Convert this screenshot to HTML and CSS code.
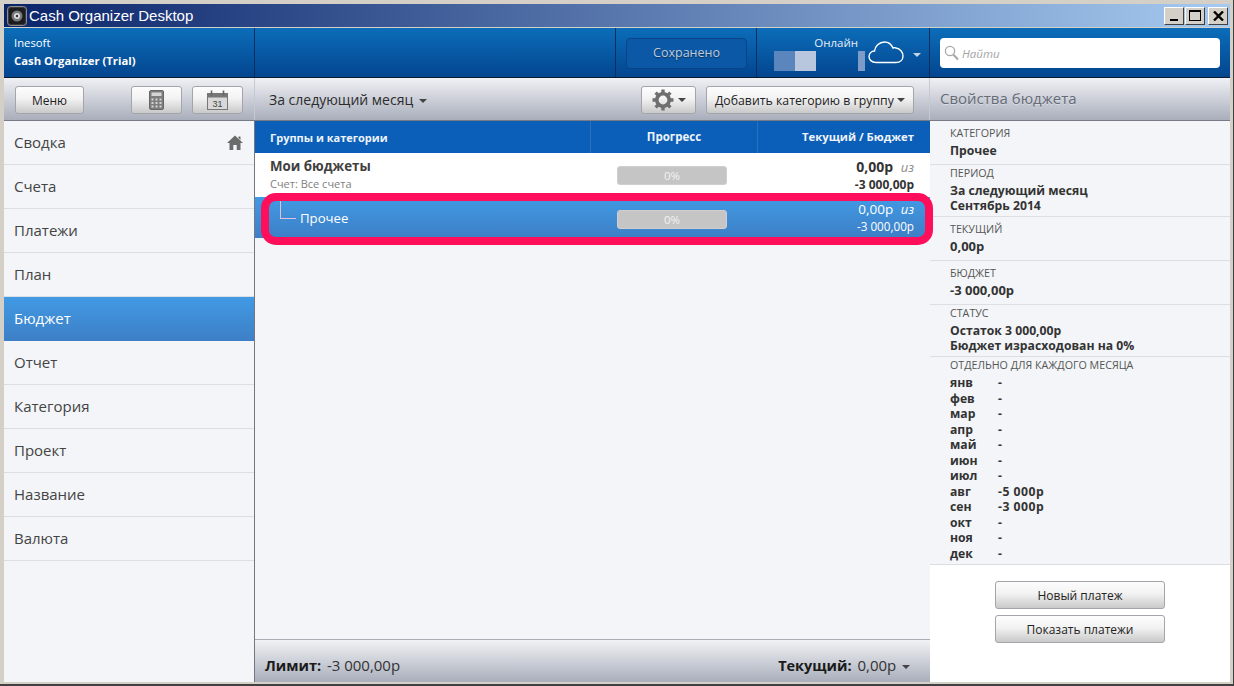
FILE: index.html
```html
<!DOCTYPE html>
<html>
   <head>
      <meta charset="UTF-8">
      <title>Cash Organizer Desktop</title>
      <link rel="stylesheet" href="styles.css">
   </head>
   <body>
      <div class="window">
         <div class="titlebar">
            <svg class="app-icon" width="20" height="20" viewBox="0 0 20 20">
               <rect x="0.5" y="0.5" width="19" height="19" rx="3" fill="#3a3a3c" stroke="#8d8d8d"/>
               <rect x="2" y="2" width="16" height="16" rx="2" fill="#1c1c1e"/>
               <circle cx="10" cy="10" r="5.5" fill="#77797c"/>
               <circle cx="10" cy="10" r="3" fill="#d9dadb"/>
               <circle cx="10" cy="10" r="1.2" fill="#333"/>
            </svg>
            <span class="title-text">Cash Organizer Desktop</span>
            <div class="win-buttons">
               <div class="win-btn"><span class="win-min"></span></div>
               <div class="win-btn"><span class="win-max"></span></div>
               <div class="win-btn win-btn-close">
                  <svg width="11" height="10" viewBox="0 0 11 10"><path d="M1 0.5 L10 9.5 M10 0.5 L1 9.5" stroke="#000" stroke-width="2.4" fill="none"/></svg>
               </div>
            </div>
         </div>

         <div class="header">
            <div class="brand">
               <div class="brand-company">Inesoft</div>
               <div class="brand-product">Cash Organizer (Trial)</div>
            </div>
            <div class="header-blank"></div>
            <div class="header-saved"><div class="saved-btn">Сохранено</div></div>
            <div class="header-online">
               <div class="online-text">
                  <div class="online-label">Онлайн</div>
                  <div class="online-bar">
                     <span class="blur-a"></span><span class="blur-b"></span><span class="blur-gap"></span><span class="blur-c"></span>
                  </div>
               </div>
               <svg class="cloud" width="36" height="24" viewBox="0 0 36 24">
                  <path d="M8 22.5 C3.5 22.5 1 19.5 1 16.5 C1 13.5 3.5 11 6.5 11 C7 6.5 11 2 16.5 2 C20.5 2 23.5 4.5 25 8 C26 7.5 27 7.5 28 8 C32 8.5 35 12 35 16 C35 20 32 22.5 28 22.5 Z" fill="none" stroke="#fff" stroke-width="1.4"/>
               </svg>
               <span class="caret caret-light"></span>
            </div>
            <div class="header-search">
               <div class="search-box">
                  <svg width="15" height="16" viewBox="0 0 15 16">
                     <circle cx="6" cy="6" r="4.6" fill="none" stroke="#a8a8a8" stroke-width="1.3"/>
                     <path d="M9.5 9.8 L14 14.5" stroke="#a8a8a8" stroke-width="2" fill="none"/>
                  </svg>
                  <span class="search-text">Найти</span>
               </div>
            </div>
         </div>

         <div class="toolbar">
            <div class="tool-left">
               <div class="btn btn-menu">Меню</div>
               <div class="btn btn-icon btn-calc">
                  <svg width="15" height="20" viewBox="0 0 15 20">
                     <rect x="0.5" y="0.5" width="14" height="19" rx="1.5" fill="#7d7d7d" stroke="#666"/>
                     <rect x="2.5" y="2.5" width="10" height="3.5" fill="#d5d5d5"/>
                     <path d="M2.5 8.5h2v2h-2zM6.5 8.5h2v2h-2zM10.5 8.5h2v2h-2zM2.5 12h2v2h-2zM6.5 12h2v2h-2zM10.5 12h2v2h-2zM2.5 15.5h2v2h-2zM6.5 15.5h2v2h-2zM10.5 15.5h2v2h-2z" fill="#d5d5d5"/>
                  </svg>
               </div>
               <div class="btn btn-icon">
                  <svg width="21" height="20" viewBox="0 0 21 20">
                     <rect x="0.5" y="3.5" width="20" height="16" fill="#d8d8d8" stroke="#777"/>
                     <rect x="0.5" y="3.5" width="20" height="4" fill="#777"/>
                     <path d="M4.5 0.5v5M16.5 0.5v5" stroke="#666" stroke-width="1.6"/>
                     <text x="10.5" y="17" class="cal-num">31</text>
                  </svg>
               </div>
            </div>
            <div class="tool-center">
               <div class="period">За следующий месяц <span class="caret period-caret"></span></div>
               <div class="tool-actions">
                  <div class="btn btn-gear">
                     <svg width="22" height="22" viewBox="0 0 22 22">
                        <circle cx="11" cy="11" r="6.2" fill="none" stroke="#6f6f6f" stroke-width="3.6"/>
                        <g stroke="#6f6f6f" stroke-width="3.4">
                           <path d="M11 0.5v4M11 17.5v4M0.5 11h4M17.5 11h4M3.6 3.6l2.8 2.8M15.6 15.6l2.8 2.8M3.6 18.4l2.8-2.8M15.6 6.4l2.8-2.8"/>
                        </g>
                     </svg>
                     <span class="caret"></span>
                  </div>
                  <div class="btn btn-add">Добавить категорию в группу <span class="caret"></span></div>
               </div>
            </div>
            <div class="tool-right">Свойства бюджета</div>
         </div>

         <div class="main">
            <ul class="nav">
               <li class="nav-item">Сводка
                  <svg class="nav-home" width="16" height="15" viewBox="0 0 16 15"><path d="M8 0.5 L16 8 L13.5 8 L13.5 15 L9.7 15 L9.7 10 L6.3 10 L6.3 15 L2.5 15 L2.5 8 L0 8 Z M11.5 1.5 h2 v3.5 l-2 -2 z" fill="#6b6b6b"/></svg>
               </li>
               <li class="nav-item">Счета</li>
               <li class="nav-item">Платежи</li>
               <li class="nav-item">План</li>
               <li class="nav-item nav-active">Бюджет</li>
               <li class="nav-item">Отчет</li>
               <li class="nav-item">Категория</li>
               <li class="nav-item">Проект</li>
               <li class="nav-item">Название</li>
               <li class="nav-item">Валюта</li>
            </ul>

            <div class="budget">
               <div class="table-head">
                  <div class="col-name">Группы и категории</div>
                  <div class="col-progress">Прогресс</div>
                  <div class="col-amount">Текущий / Бюджет</div>
               </div>
               <div class="row row-group">
                  <div class="col-name">
                     <div class="group-name">Мои бюджеты</div>
                     <div class="group-sub">Счет: Все счета</div>
                  </div>
                  <div class="col-progress"><div class="progress">0%</div></div>
                  <div class="col-amount">
                     <div class="amount-top">0,00р <i>из</i></div>
                     <div class="amount-bottom">-3 000,00р</div>
                  </div>
               </div>
               <div class="row row-selected">
                  <div class="col-name"><span class="tree-line"></span>Прочее</div>
                  <div class="col-progress"><div class="progress">0%</div></div>
                  <div class="col-amount">
                     <div class="amount-top">0,00р <i>из</i></div>
                     <div class="amount-bottom">-3 000,00р</div>
                  </div>
               </div>
               <div class="budget-empty"></div>
               <div class="budget-foot">
                  <div><b>Лимит:</b> <span class="foot-num">-3 000,00р</span></div>
                  <div><b>Текущий:</b> <span class="foot-num">0,00р</span> <span class="caret"></span></div>
               </div>
            </div>

            <div class="props">
               <div class="prop prop-1">
                  <div class="prop-label">Категория</div>
                  <div class="prop-value">Прочее</div>
               </div>
               <div class="prop prop-2">
                  <div class="prop-label">Период</div>
                  <div class="prop-value">За следующий месяц<br>Сентябрь 2014</div>
               </div>
               <div class="prop prop-3">
                  <div class="prop-label">Текущий</div>
                  <div class="prop-value prop-num">0,00р</div>
               </div>
               <div class="prop prop-3">
                  <div class="prop-label">Бюджет</div>
                  <div class="prop-value prop-num">-3 000,00р</div>
               </div>
               <div class="prop prop-2">
                  <div class="prop-label">Статус</div>
                  <div class="prop-value">Остаток 3 000,00р<br>Бюджет израсходован на 0%</div>
               </div>
               <div class="prop prop-months">
                  <div class="prop-label">Отдельно для каждого месяца</div>
                  <div class="months">
                     <span>янв</span><span>-</span>
                     <span>фев</span><span>-</span>
                     <span>мар</span><span>-</span>
                     <span>апр</span><span>-</span>
                     <span>май</span><span>-</span>
                     <span>июн</span><span>-</span>
                     <span>июл</span><span>-</span>
                     <span>авг</span><span class="month-num">-5 000р</span>
                     <span>сен</span><span class="month-num">-3 000р</span>
                     <span>окт</span><span>-</span>
                     <span>ноя</span><span>-</span>
                     <span>дек</span><span>-</span>
                  </div>
               </div>
               <div class="props-actions">
                  <div class="btn btn-wide">Новый платеж</div>
                  <div class="btn btn-wide">Показать платежи</div>
               </div>
            </div>
         </div>

         <div class="highlight"></div>
      </div>
   </body>
</html>
```

FILE: styles.css
```css
*
{
   box-sizing: border-box;
}

html, body
{
   margin: 0;
   height: 100%;
   overflow: hidden;
}

body
{
   font-family: "Open Sans", "Liberation Sans", sans-serif;
   color: #333;
}

.window
{
   position: relative;
   width: 1234px;
   height: 686px;
   padding: 4px 3px 2px 4px;
   display: flex;
   flex-direction: column;
   background: #d4d0c8;
   border-right: 1px solid #404040;
   border-bottom: 2px solid #404040;
}

/* title bar */
.titlebar
{
   height: 23px;
   flex: none;
   display: flex;
   align-items: center;
   padding: 0 2px 0 3px;
   background: linear-gradient(to right, #0a246a 0%, #a6caf0 100%);
   margin-bottom: 1px;
}

.app-icon
{
   flex: none;
}

.title-text
{
   margin-left: 2px;
   font-family: "Liberation Sans", sans-serif;
   font-size: 15px;
   color: #fff;
}

.win-buttons
{
   margin-left: auto;
   display: flex;
   gap: 1px;
}

.win-btn
{
   width: 20px;
   height: 18px;
   position: relative;
   display: flex;
   align-items: center;
   justify-content: center;
   background: #d4d0c8;
   border: 1px solid;
   border-color: #fff #404040 #404040 #fff;
}

.win-btn-close
{
   margin-left: 2px;
}

.win-min
{
   width: 8px;
   height: 2px;
   background: #000;
   margin-top: 9px;
}

.win-max
{
   width: 12px;
   height: 11px;
   border: 1px solid #000;
   border-top-width: 2px;
}

/* blue header */
.header
{
   height: 50px;
   flex: none;
   display: flex;
   background: linear-gradient(to bottom, #0c6db9, #03458f);
   border-bottom: 1px solid #0b1a2c;
   color: #fff;
}

.brand
{
   width: 251px;
   padding: 7px 0 0 10px;
   border-right: 1px solid #0a2f5d;
   font-size: 11.3px;
}

.brand-company
{
   line-height: 15px;
}

.brand-product
{
   margin-top: 3px;
   line-height: 15px;
   font-weight: 700;
}

.header-blank
{
   width: 361px;
   border-right: 1px solid #0a2f5d;
}

.header-saved
{
   width: 141px;
   padding: 10px 9px 0 10px;
   border-right: 1px solid #0a2f5d;
}

.saved-btn
{
   height: 31px;
   line-height: 27px;
   text-align: center;
   font-size: 12.5px;
   color: #c0ccda;
   background: #0a58a6;
   border: 1px solid #0a4387;
   border-radius: 4px;
   text-shadow: 0 1px 1px #07305f;
}

.header-online
{
   width: 173px;
   display: flex;
   padding: 7px 0 0 17px;
   position: relative;
   border-right: 1px solid #0a2f5d;
}

.online-text
{
   width: 91px;
}

.online-label
{
   font-size: 11.5px;
   line-height: 15px;
   text-align: right;
   padding-right: 7px;
   color: #e4ecf5;
}

.online-bar
{
   display: flex;
   height: 20px;
   margin-top: 1px;
}

.blur-a
{
   width: 21px;
   background: #5b85bd;
}

.blur-b
{
   width: 21px;
   background: #b8c6de;
}

.blur-gap
{
   width: 42px;
}

.blur-c
{
   width: 7px;
   background: #7e9cc9;
}

.cloud
{
   margin-top: 5px;
   margin-left: 3px;
}

.header-online .caret
{
   margin: 18px 0 0 9px;
}

.header-search
{
   flex: 1;
   padding: 10px 10px 0 10px;
}

.search-box
{
   height: 30px;
   display: flex;
   align-items: center;
   padding-left: 4px;
   gap: 3px;
   background: #fff;
   border-radius: 4px;
}

.search-text
{
   font-size: 11.5px;
   font-style: italic;
   color: #a4a4a4;
}

/* carets */
.caret
{
   display: inline-block;
   width: 0;
   height: 0;
   vertical-align: middle;
   border-left: 4px solid transparent;
   border-right: 4px solid transparent;
   border-top: 4px solid #444;
}

.caret-light
{
   border-top-color: #c6d6e8;
}

.period-caret
{
   margin-left: 2px;
}

/* toolbar */
.toolbar
{
   height: 43px;
   flex: none;
   display: flex;
   background: linear-gradient(to bottom, #f0f1f5, #a9aebb);
   border-bottom: 1px solid #777b85;
}

.tool-left
{
   width: 251px;
   padding: 8px 0 0 11px;
   display: flex;
   border-right: 1px solid #c6c9d2;
}

.tool-center
{
   width: 675px;
   display: flex;
   justify-content: space-between;
   padding: 8px 15px 0 14px;
   border-right: 1px solid #c6c9d2;
}

.period
{
   font-size: 14px;
   line-height: 27px;
   color: #2c2c2c;
}

.tool-actions
{
   display: flex;
   gap: 10px;
}

.tool-right
{
   flex: 1;
   padding-left: 10px;
   font-size: 15px;
   line-height: 41px;
   color: #666b76;
   text-shadow: 0 1px 0 #d8dbe2;
}

.btn
{
   height: 28px;
   display: flex;
   align-items: center;
   justify-content: center;
   font-size: 12px;
   color: #222;
   background: linear-gradient(to bottom, #fdfdfd 0%, #f2f2f2 45%, #c9c9c9 100%);
   border: 1px solid #a3a5ab;
   border-radius: 3px;
}

.btn-menu
{
   width: 69px;
   margin-right: 47px;
}

.btn-icon
{
   width: 51px;
   margin-right: 10px;
}

.btn-gear
{
   width: 55px;
   gap: 4px;
}

.btn-add
{
   width: 208px;
   font-size: 12.3px;
   white-space: pre;
}

.cal-num
{
   font-family: "Liberation Sans", sans-serif;
   font-size: 9px;
   fill: #444;
   text-anchor: middle;
}

/* main area */
.main
{
   flex: 1;
   min-height: 0;
   display: flex;
}

.nav
{
   width: 251px;
   margin: 0;
   padding: 0;
   list-style: none;
   background: #f3f5f8;
   border-right: 1px solid #74777f;
}

.nav-item
{
   height: 44px;
   display: flex;
   align-items: center;
   justify-content: space-between;
   padding: 0 11px 2px 10px;
   font-size: 15px;
   color: #444;
   border-bottom: 1px solid #dcdee2;
}

.nav-home
{
   margin-top: 2px;
}

.nav-active
{
   color: #fff;
   background: linear-gradient(to bottom, #419ae4, #3d7fc6);
   border-bottom: none;
   padding-bottom: 3px;
}

.budget
{
   width: 675px;
   display: flex;
   flex-direction: column;
   background: #f3f5f8;
}

.table-head
{
   height: 32px;
   flex: none;
   display: flex;
   align-items: center;
   font-size: 11.5px;
   font-weight: 700;
   color: #eef4fb;
   background: #0b5fb9;
}

.table-head .col-name
{
   font-size: 11px;
}

.table-head .col-amount
{
   font-size: 11.3px;
}

.table-head .col-progress,
.table-head .col-amount
{
   height: 100%;
   line-height: 32px;
   border-left: 1px solid #2a70bb;
}

.col-name
{
   width: 335px;
   padding-left: 15px;
}

.col-progress
{
   width: 167px;
   text-align: center;
}

.col-amount
{
   flex: 1;
   padding-right: 16px;
   text-align: right;
}

.row
{
   display: flex;
   align-items: center;
   flex: none;
}

.row-group
{
   height: 44px;
   background: #fff;
}

.row-selected
{
   height: 41px;
   color: #fff;
   background: linear-gradient(to bottom, #419ae4, #3d7fc6);
}

.row-selected .col-name
{
   position: relative;
   padding-left: 45px;
   font-size: 13.2px;
}

.row-selected .col-progress
{
   padding-top: 4px;
}

.row-selected .amount-top
{
   font-size: 13.5px;
}

.row-selected .amount-bottom
{
   font-size: 11.7px;
}

.tree-line
{
   position: absolute;
   left: 25px;
   top: -15px;
   width: 16px;
   height: 25px;
   border-left: 1px solid #e4bde2;
   border-bottom: 1px solid #e4bde2;
}

.group-name
{
   margin-top: -2px;
   font-size: 13.3px;
   font-weight: 700;
   line-height: 18px;
   color: #404040;
}

.group-sub
{
   margin-top: 1px;
   font-size: 11px;
   line-height: 15px;
   color: #808080;
}

.progress
{
   width: 110px;
   height: 19px;
   margin-left: 27px;
   line-height: 17px;
   font-size: 11.5px;
   color: #f2f2f2;
   background: #c5c5c5;
   border: 1px solid #cfcfcf;
   border-radius: 3px;
}

.amount-top
{
   font-size: 14px;
   line-height: 18px;
}

.amount-top i
{
   margin-left: 4px;
   font-size: 13px;
}

.amount-bottom
{
   font-size: 12px;
   line-height: 17px;
}

.row-group .amount-top,
.row-group .amount-bottom
{
   font-weight: 700;
}

.row-group .amount-top i
{
   font-weight: 400;
   color: #8c8c8c;
}

.budget-empty
{
   flex: 1;
}

.budget-foot
{
   height: 43px;
   flex: none;
   display: flex;
   align-items: center;
   justify-content: space-between;
   padding: 7px 20px 0 10px;
   font-size: 14.5px;
   color: #333;
   background: linear-gradient(to bottom, #f1f2f5, #a9aebb);
   border-top: 1px solid #a9acb5;
}

.budget-foot b
{
   margin-right: 2px;
   color: #1a1a1a;
}

.foot-num
{
   font-size: 15px;
   margin-right: 2px;
}

/* properties panel */
.props
{
   flex: 1;
   display: flex;
   flex-direction: column;
   font-size: 12.2px;
   background: #f3f5f8;
}

.prop
{
   flex: none;
   padding-left: 20px;
   border-bottom: 1px solid #dcdee2;
}

.prop-1
{
   height: 44px;
   padding-top: 4px;
}

.prop-2
{
   height: 52px;
}

.prop-3
{
   height: 44px;
   padding-top: 4px;
}

.prop-months
{
   height: 208px;
}

.prop-label
{
   font-size: 10.7px;
   line-height: 16px;
   text-transform: uppercase;
   color: #555;
}

.prop-value
{
   margin-top: 2px;
   font-weight: 700;
   line-height: 15px;
   color: #333;
}

.prop-num
{
   font-size: 13px;
}

.months
{
   display: grid;
   grid-template-columns: 48px 1fr;
   grid-auto-rows: 15.5px;
   margin-top: 2px;
   font-weight: 700;
   line-height: 15.5px;
}

.month-num
{
   letter-spacing: 0.5px;
}

.props-actions
{
   flex: 1;
   display: flex;
   flex-direction: column;
   align-items: center;
   gap: 6px;
   padding-top: 16px;
   background: #fff;
}

.btn-wide
{
   width: 170px;
}

/* red marker drawn over the selected row */
.highlight
{
   position: absolute;
   left: 261px;
   top: 193px;
   width: 672px;
   height: 52px;
   border: 8px solid #ff0f5b;
   border-radius: 15px;
}
```
